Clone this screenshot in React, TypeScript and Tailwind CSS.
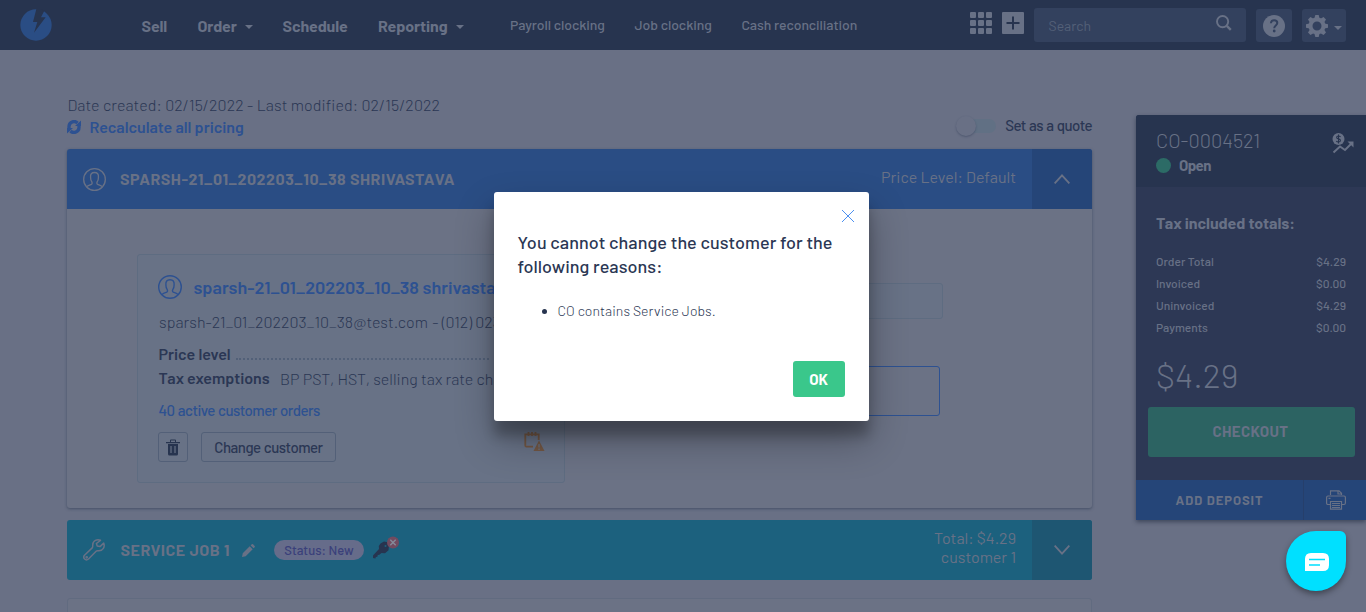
import React from "react";

function Caret({ className = "" }: { className?: string }) {
  return (
    <svg className={className} width="8" height="4" viewBox="0 0 8 4">
      <path d="M0 0h8L4 4z" fill="currentColor" />
    </svg>
  );
}

function Person({ size }: { size: number }) {
  return (
    <svg width={size} height={size} viewBox="0 0 24 24" fill="none" stroke="currentColor" strokeWidth="1.4">
      <circle cx="12" cy="12" r="11.3" />
      <path d="M4.2 19.6c.6-1.3 2.700-1.700 4.600-2.500.9-.4.9-1.800.3-2.800-.9-1.200-1.200-2.500-1.200-4.300C7.500 6.400 9 4.700 12 4.700s4.500 1.700 4.100 5.300c0 1.800-.3 3.100-1.200 4.300-.6 1-.6 2.400.3 2.800 1.900.8 4 1.200 4.600 2.500" />
    </svg>
  );
}

function Logo() {
  return (
    <svg width="32" height="32" viewBox="0 0 96 96">
      <circle cx="48" cy="48" r="47" fill="#2a4d84" />
      <path d="M49 0 39 39h13L42 71 77 25H63l10-20L62 0z" fill="#27344f" />
    </svg>
  );
}

function Header() {
  return (
    <header className="flex h-[50px] w-full shrink-0 bg-[#27344f] text-[#687186]">
      <div className="ml-5 mt-[9px] w-[121.500px]"><Logo /></div>
      <nav className="flex h-[52px] items-center text-[16px] font-bold leading-5">
        <span className="w-[56px] tracking-[-0.1px]">Sell</span>
        <span className="w-[47px] tracking-[-0.1px]">Order</span>
        <Caret className="mr-[30px] mt-[1px]" />
        <span className="w-[95.500px] tracking-[-0.1px]">Schedule</span>
        <span className="w-[77.500px] tracking-[-0.1px]">Reporting</span>
        <Caret className="mr-[46.500px] mt-[1px]" />
      </nav>
      <nav className="flex h-[49px] items-center whitespace-nowrap text-[14px] font-medium leading-5 tracking-[-0.07px]">
        <span className="w-[124.500px]">Payroll clocking</span>
        <span className="w-[107px]">Job clocking</span>
        <span className="w-[228px]">Cash reconciliation</span>
      </nav>
      <svg className="mt-3 shrink-0" width="22" height="22" viewBox="0 0 22 22" fill="currentColor">
        {[0, 8, 16].map((y) => [0, 8, 16].map((x) => <rect key={`${x}-${y}`} x={x} y={y} width="6" height="6" rx="1" />))}
      </svg>
      <svg className="ml-[10px] mt-3 shrink-0" width="22" height="22" viewBox="0 0 22 22">
        <rect width="22" height="22" rx="1" fill="currentColor" />
        <path d="M11 4.500v13M4.500 11h13" stroke="#27344f" strokeWidth="2" />
      </svg>
      <div className="ml-[10px] mt-2 flex h-[34px] w-[212px] shrink-0 justify-between rounded-[3px] bg-[#33415e] pl-[15px] pr-[13px]">
        <span className="pt-[8px] text-[14px] leading-5 text-[#536078]">Search</span>
        <svg className="mt-[6px]" width="18" height="18" viewBox="0 0 18 18" fill="none" stroke="currentColor" strokeWidth="1.900">
          <circle cx="7.600" cy="7.600" r="5.600" />
          <path d="m11.800 11.800 4 4" strokeWidth="2.400" />
        </svg>
      </div>
      <div className="ml-[10px] mt-[9px] flex h-[33px] w-9 shrink-0 items-center justify-center rounded-[3px] bg-[#33415e]">
        <svg width="22" height="22" viewBox="0 0 22 22">
          <circle cx="11" cy="11" r="11" fill="currentColor" />
          <path d="M7.900 8.300c.1-2 1.400-3 3.200-3s3.200 1.100 3.200 2.700c0 2.400-3.100 2.600-3.100 5.200" fill="none" stroke="#33415e" strokeWidth="2" />
          <circle cx="11.200" cy="16" r="1.400" fill="#33415e" />
        </svg>
      </div>
      <div className="ml-[10px] mt-[9px] flex h-[33px] w-11 shrink-0 items-center rounded-[3px] bg-[#33415e] pl-1">
        <svg width="22" height="22" viewBox="-11 -11 22 22">
          <circle r="6.500" fill="none" stroke="currentColor" strokeWidth="4" />
          {[0, 45, 90, 135, 180, 225, 270, 315].map((a) => (
            <path key={a} transform={`rotate(${a})`} d="M-2.600-7.500-1.700-11h3.400l.9 3.500z" fill="currentColor" />
          ))}
        </svg>
        <Caret className="ml-[6px] mt-[4px]" />
      </div>
    </header>
  );
}

function CustomerBox() {
  return (
    <div className="h-[229px] w-[428px] overflow-hidden whitespace-nowrap rounded-[3px] border border-[#5e6c81] bg-[#687286] pl-5 text-[#2b3754]">
      <div className="mt-5 flex h-6 items-center text-[#2d5191]">
        <Person size={24} />
        <span className="ml-[11.500px] text-[18px] font-semibold leading-6">sparsh-21_01_202203_10_38 shrivastava</span>
      </div>
      <div className="mt-[11px] pl-px text-[16px] font-light leading-6 tracking-[0.03px]">sparsh-21_01_202203_10_38@test.com <span className="ml-[1px]">- (012) 023-0123</span></div>
      <div className="mt-2 flex h-6 pl-[0.500px] text-[16px] font-semibold leading-6">
        <span className="w-[77px]">Price level</span>
        <span className="mt-[16px] h-[2px] w-[253px] border-b-2 border-dotted border-[#526078]" />
      </div>
      <div className="flex h-6 pl-[0.500px] leading-6">
        <span className="w-[121.500px] text-[16px] font-semibold">Tax exemptions</span>
        <span className="pt-px text-[16px] font-light tracking-[0.02px]">BP PST, HST, selling tax rate charge</span>
      </div>
      <div className="mt-2 pl-[0.500px] text-[15px] font-medium leading-6 tracking-[-0.52px] text-[#2d5191] [word-spacing:0.8px]">40 active customer orders</div>
      <div className="mt-[10px] flex">
        <div className="flex h-[30px] w-[30px] items-center justify-center rounded-[3px] border border-[#536078]">
          <svg width="14" height="17" viewBox="0 0 14 17" fill="#27344f">
            <path d="M0 3h14v1.200H0zM4 3V1.500Q4 .5 5 .5h4q1 0 1 1V3H9V1.500H5V3zM2 5h10v10q0 1.500-1.500 1.500h-7Q2 16.500 2 15z" />
            <path d="M5 7v7M9 7v7" stroke="#687286" strokeWidth="1.200" />
          </svg>
        </div>
        <div className="ml-[13px] flex h-[30px] w-[135px] items-center justify-center rounded-[3px] border border-[#536078] pt-px text-[15px] font-medium tracking-[-0.5px] [word-spacing:0.7px]">Change customer</div>
        <svg className="-mt-px ml-[188px]" width="22" height="22" viewBox="0 0 22 22" fill="none" stroke="#725744" strokeWidth="1.800">
          <path d="M9 15.700H2.500Q1.300 15.700 1.300 14.500V3.300H14.700V9M4.500 1v4M8 1v4M11.500 1v4" />
          <path d="M15 9.500 20.500 20H9.500z" fill="#725744" stroke="none" />
          <path d="M15 13v3.500M15 17.600v1.300" stroke="#687286" strokeWidth="1.200" />
        </svg>
      </div>
    </div>
  );
}

function Main() {
  return (
    <main className="ml-[67px] flex w-[1025px] shrink-0 flex-col">
      <div className="flex h-[99px] shrink-0 justify-between pt-[44px]">
        <div className="text-[16px] leading-[22px]">
          <div className="pl-[0.500px] font-light tracking-[0.08px] text-[#2b3754]">Date created: 02/15/2022 - Last modified: 02/15/2022</div>
          <div className="flex items-center font-semibold text-[#2d5191]">
            <svg className="mr-[8.500px]" width="14" height="14" viewBox="0 0 14 14" fill="none" stroke="currentColor" strokeWidth="3.300">
              <path d="M2 8V6.500A5 5 0 0 1 10.500 3M12 6v1.500A5 5 0 0 1 3.500 11" />
              <path d="M14 .5v5.500H8zM0 13.500V8h6z" fill="currentColor" stroke="none" />
            </svg>
            <span>Recalculate all pricing</span>
          </div>
        </div>
        <div className="mt-[22px] flex h-5 items-center text-[15px] font-medium tracking-[-0.55px] text-[#2b3754] [word-spacing:0.8px]">
          <span className="mr-[9px] flex h-[14px] w-[39px] items-center rounded-full bg-[#617084]">
            <span className="-ml-px h-5 w-5 shrink-0 rounded-full bg-[#697085] shadow-[0_1px_2px_rgba(39,52,79,0.4)]" />
          </span>
          <span className="-mt-px">Set as a quote</span>
        </div>
      </div>
      <section className="h-[359px] w-full shrink-0 rounded-[3px] bg-[#6b7285] shadow-[0_1px_3px_rgba(39,52,79,0.55)]">
        <div className="flex h-[60px] items-center rounded-t-[3px] bg-[#2a4d84] pl-[16px] text-[#687186]">
          <Person size={23} />
          <span className="ml-[14px] flex-1 text-[16px] font-bold tracking-[0.52px]">SPARSH-21_01_202203_10_38 SHRIVASTAVA</span>
          <span className="mr-4 pb-[4px] text-[16px]">Price Level: Default</span>
          <span className="flex h-[60px] w-[60px] items-center justify-center rounded-tr-[3px] bg-[#254578]">
            <svg width="16" height="10" viewBox="0 0 16 10" fill="none" stroke="currentColor" strokeWidth="1.900"><path d="m.6 9.400 7.400-8 7.400 8" /></svg>
          </span>
        </div>
        <div className="flex justify-between pl-[70px] pr-[149px] pt-[45px]">
          <CustomerBox />
          <div className="flex w-[340px] flex-col pt-[29px]">
            <div className="h-9 rounded-[3px] border border-[#5e6c81] bg-[#687286]" />
            <div className="mr-[3px] mt-[47px] h-[50px] rounded-[3px] border border-[#2d5191]" />
          </div>
        </div>
      </section>
      <section className="mt-[12px] flex h-[60px] shrink-0 items-center rounded-[3px] bg-[#1c617e] pl-[16px] text-[#687186]">
        <svg width="22" height="22" viewBox="0 0 22 22" fill="none" stroke="currentColor" strokeWidth="1.500" strokeLinejoin="round">
          <path d="M17.500 1.300C14.500 0 9.500 1.200 9.700 6.500c0 1.100.2 1.700-.5 2.400L1.500 16.300C-.6 18.800 2.600 22.500 5.500 20l7.600-7.800c.7-.7 1.500-.5 2.500-.4 4.400.2 6.600-4 5.100-7.700L17 7.600 14.200 7l-.8-2.500z" />
          <circle cx="3.700" cy="18.300" r=".6" />
        </svg>
        <span className="ml-[15.500px] w-[120.500px] text-[16px] font-bold tracking-[0.52px]">SERVICE JOB 1</span>
        <svg className="ml-px" width="13" height="13" viewBox="0 0 14 14" fill="currentColor"><path d="m0 14 .8-4L8.300 2.500l3.200 3.200L4 13.200zM9.300 1.500 10.500.4q.7-.7 1.400 0l1.700 1.700q.7.700 0 1.400l-1.100 1.200z" /></svg>
        <span className="ml-[19px] flex h-5 w-[90px] items-center justify-center rounded-full bg-[#666c8a] pt-px text-[13px] font-medium text-[#3a407a]">Status: New</span>
        <svg className="mb-[4px] ml-2" width="28" height="24" viewBox="0 0 28 24">
          <path d="M8.500 7.500 12 5.500l3.500.7 1.500 3-.5 5-3.500 3-3.500-.2-2.500 2-1.200-.2-.4 2-1.600.2L3.500 22.500 1 22v-2.500l6-6.500-.2-3z" fill="#27344f" />
          <circle cx="13.500" cy="10" r="1" fill="#1c617e" />
          <circle cx="21" cy="6.500" r="6" fill="#714b60" />
          <path d="m18.300 3.800 5.400 5.400m0-5.400-5.400 5.400" stroke="#858a9a" strokeWidth="1.400" />
        </svg>
        <div className="mr-4 flex-1 pb-[6px] text-right text-[16px] leading-[19px]">
          <div>Total: $4.29</div><div>customer 1</div>
        </div>
        <div className="flex h-[60px] w-[60px] items-center justify-center rounded-r-[3px] bg-[#1e5672]">
          <svg width="16" height="10" viewBox="0 0 16 10" fill="none" stroke="currentColor" strokeWidth="1.900"><path d="m.6.600 7.400 8 7.400-8" /></svg>
        </div>
      </section>
      <section className="mt-[18px] h-10 w-full shrink-0 rounded-[3px] border border-[#616b80] bg-[#6b7285]" />
    </main>
  );
}

const totals = [["Order Total", "$4.29"], ["Invoiced", "$0.00"], ["Uninvoiced", "$4.29"], ["Payments", "$0.00"]];

function Summary() {
  return (
    <aside className="ml-[44px] mt-[65px] h-[405px] w-[230px] shrink-0 rounded-tl-[3px] bg-[#2d3855] text-[#687186] shadow-[0_2px_4px_rgba(20,30,50,0.5)]">
      <div className="flex h-[72px] justify-between rounded-tl-[3px] bg-[#27344f] pl-5 pr-3">
        <div className="pt-[13px]">
          <div className="text-[20px] font-light leading-6">CO-0004521</div>
          <div className="mt-[3px] flex items-center text-[15px] font-bold leading-[22px] tracking-[-0.6px]">
            <span className="mr-2 h-[15px] w-[15px] rounded-full bg-[#2c6b66]" /><span className="-mt-px">Open</span>
          </div>
        </div>
        <svg className="mt-[17px]" width="22" height="22" viewBox="0 0 22 22">
          <circle cx="6.500" cy="7" r="6" fill="currentColor" />
          <path d="M8.500 5q-.6-1-2-1c-2.500 0-2.500 2.500 0 2.900 2.700.4 2.500 3.100 0 3.100q-1.600 0-2.200-1.100M6.500 2.500V11.500" fill="none" stroke="#27344f" strokeWidth="1.100" />
          <path d="m1.500 20.500 6.500-6 5 3.500 6.500-6.500" fill="none" stroke="currentColor" strokeWidth="2" />
          <path d="M15.500 9.500H21.500V15.500z" fill="currentColor" />
        </svg>
      </div>
      <div className="h-[293px] pt-[26px]">
        <div className="pl-5 text-[16px] font-bold leading-5 tracking-[-0.05px]">Tax included totals:</div>
        <div className="mt-[17px] pl-5 pr-5 text-[12px] font-medium leading-[22px]">
          {totals.map(([label, amount]) => <div className="flex justify-between" key={label}><span>{label}</span><span>{amount}</span></div>)}
        </div>
        <div className="mt-[17px] pl-5 text-[34px] font-light leading-10">$4.29</div>
        <div className="ml-3 mt-[12px] flex h-[50px] w-[207px] items-center justify-center rounded-[3px] bg-[#2c6362] pb-[2px] pr-[2px] text-[15px] font-bold tracking-[0.4px]">CHECKOUT</div>
      </div>
      <div className="flex h-10 bg-[#254578]">
        <div className="flex w-[168px] items-center justify-center border-r border-[#263f6b] pt-px text-[13px] font-bold tracking-[0.95px]">ADD DEPOSIT</div>
        <div className="flex flex-1 items-center justify-center pl-[2px]">
          <svg width="20" height="20" viewBox="0 0 20 20" fill="none" stroke="currentColor" strokeWidth="1.200">
            <path d="M4.500 5V.8h8.500l2.500 2.500V5M12 1v3h3.500M4.500 14.500H2A1.400 1.400 0 0 1 .6 13V7.500Q.6 6 2 6h16q1.400 0 1.400 1.500V13q0 1.500-1.400 1.500h-2.500M4.500 11.500h11v7.700h-11zM6 13.500h8M6 15.500h8M6 17.500h8M2.500 8.300h2" />
          </svg>
        </div>
      </div>
    </aside>
  );
}

function Dialog() {
  return (
    <div role="dialog" className="absolute left-[494px] top-[192px] h-[229px] w-[375px] rounded-[3px] bg-white px-6 text-[#2b3754] shadow-[0_19px_38px_rgba(0,0,0,0.3),0_15px_12px_rgba(0,0,0,0.22)]">
      <div className="flex h-[38px] justify-end pt-[18px]">
        <svg className="-mr-[9px]" width="12" height="12" viewBox="0 0 12 12" stroke="#4c90f0" strokeWidth="1"><path d="m0 0 12 12M12 0 0 12" /></svg>
      </div>
      <h2 className="-ml-[0.500px] whitespace-nowrap text-[18px] font-medium leading-6 tracking-[0.06px]">You cannot change the customer for the<br />following reasons:</h2>
      <div className="mt-[23px] flex items-center pl-6 text-[14px] font-light leading-5 tracking-[0.04px]">
        <span className="mr-[10.500px] h-[5px] w-[5px] rounded-full bg-[#27344f]" />CO contains Service Jobs.
      </div>
      <div className="mt-[40px] flex justify-end">
        <button className="h-9 w-[52px] rounded-[3px] bg-[#3ac78b] pr-[1px] text-[15px] font-bold text-white">OK</button>
      </div>
    </div>
  );
}

export default function App() {
  return (
    <div className="relative flex h-[612px] w-[1366px] flex-col overflow-hidden bg-[#697085] font-['Barlow','Roboto',sans-serif]">
      <Header />
      <div className="flex h-[562px] overflow-hidden">
        <Main />
        <Summary />
      </div>
      <Dialog />
      <div className="absolute left-[1286px] top-[531px] flex h-[60px] w-[60px] items-center justify-center rounded-[30px] rounded-tr-[6px] bg-[#00e0ff] pl-[2px] pt-[2px] shadow-[0_3px_6px_rgba(0,0,0,0.4)]">
        <svg width="24" height="18" viewBox="0 0 24 18">
          <path d="M0 18V6Q0 0 6 0h12q6 0 6 6v6q0 6-6 6z" fill="#fff" />
          <path d="M4 6.500h16M4 12h11" stroke="#00e0ff" strokeWidth="1.700" />
        </svg>
      </div>
    </div>
  );
}
